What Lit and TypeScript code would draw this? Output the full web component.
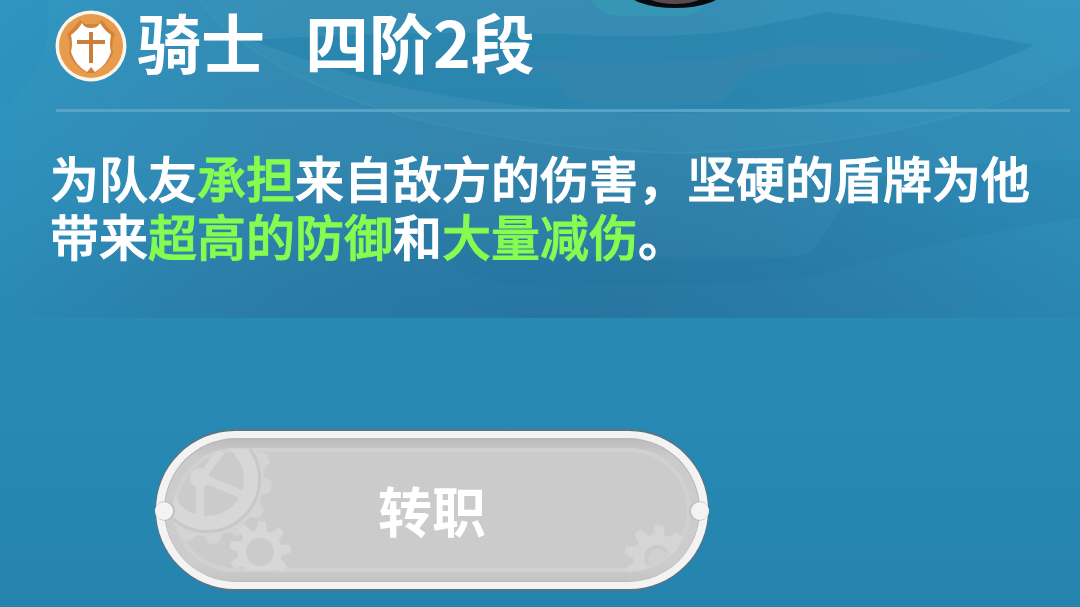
import { LitElement, html, svg, css } from "lit";
import { customElement, property } from "lit/decorators.js";

/** Outline of a gear with square-ish teeth, centred on (cx, cy). */
function gearPath(cx: number, cy: number, outer: number, root: number, teeth: number, turn = 0): string {
  const step = (Math.PI * 2) / teeth;
  const parts: string[] = [];
  for (let i = 0; i < teeth; i++) {
    const a = i * step + turn;
    const corners: [number, number][] = [
      [root, a - step * 0.36],
      [outer, a - step * 0.17],
      [outer, a + step * 0.17],
      [root, a + step * 0.36],
    ];
    for (const [r, t] of corners) {
      parts.push(`${(cx + r * Math.cos(t)).toFixed(1)} ${(cy + r * Math.sin(t)).toFixed(1)}`);
    }
  }
  return `M${parts.join("L")}Z`;
}

const circlePath = (cx: number, cy: number, r: number) =>
  `M${cx - r} ${cy}a${r} ${r} 0 1 0 ${2 * r} 0a${r} ${r} 0 1 0 ${-2 * r} 0Z`;

@customElement("scene-backdrop")
export class SceneBackdrop extends LitElement {
  static styles = css`
    :host { display: block; overflow: hidden; }
    .art { display: block; width: 100%; height: 100%; }
  `;

  render() {
    return html`
      <svg class="art" viewBox="0 0 1080 318" preserveAspectRatio="none" aria-hidden="true">
        <defs>
          <linearGradient id="shadeX" x1="0" x2="1" y1="0" y2="0">
            <stop offset="0" stop-color="#3c6f92" stop-opacity="0" />
            <stop offset=".25" stop-color="#3c6f92" stop-opacity=".28" />
            <stop offset=".6" stop-color="#3c6f92" stop-opacity=".36" />
            <stop offset="1" stop-color="#3c6f92" stop-opacity=".06" />
          </linearGradient>
          <radialGradient id="shadeC" cx=".52" cy="1" r=".55">
            <stop offset="0" stop-color="#1c6c98" stop-opacity=".55" />
            <stop offset="1" stop-color="#1c6c98" stop-opacity="0" />
          </radialGradient>
        </defs>
        <path d="M0 0H46Q60 60 0 110Z" fill="#2386b2" opacity=".15" />
        <rect width="1080" height="318" fill="url(#shadeX)" />
        <rect width="1080" height="318" fill="url(#shadeC)" />
        <path d="M200 0Q250 70 400 115Q540 152 690 153Q860 146 985 107Q1040 88 1080 62V0Z" fill="#4aa0c0" opacity=".14" />
        <path d="M200 0Q250 70 400 115Q540 152 690 153Q860 146 985 107Q1040 88 1080 62" fill="none" stroke="#45a6bd" stroke-width="2" opacity=".25" />
        <path d="M250 40Q420 30 560 34Q670 40 740 30Q790 20 828 12Q900 20 1034 45Q960 80 880 95Q780 113 650 113Q480 110 350 75Z" fill="#1f80aa" opacity=".5" />
        <path d="M440 62H560Q680 66 750 54Q810 38 860 42Q920 46 945 57Q900 66 830 64Q770 64 745 74L725 98Q722 103 710 103H588Q572 102 566 94L550 72Z" fill="#3f86ae" opacity=".45" />
        <path d="M592 0Q600 15 620 16H682Q700 14 708 0Z" fill="#36a2b5" opacity=".5" />
        <path d="M440 206L476 248Q486 257 500 257H790Q806 257 814 248L858 190L1080 150V60L985 110Q860 150 700 154Q560 154 420 120Z" fill="#3b87ae" opacity=".15" />
        <path d="M420 206L476 248Q486 257 500 257H790Q806 257 814 248L862 180Q960 160 1080 160V218Q930 240 815 277Q700 288 500 284Q450 270 400 240Z" fill="#1c7099" opacity=".16" />
        <ellipse cx="675" cy="-10" rx="49" ry="18" fill="#070b10" />
        <ellipse cx="675" cy="-10" rx="34" ry="14" fill="#5a4a4d" />
      </svg>
    `;
  }
}

@customElement("knight-emblem")
export class KnightEmblem extends LitElement {
  static styles = css`
    :host { display: block; }
    .emblem { display: block; width: 100%; height: 100%; }
  `;

  render() {
    return html`
      <svg class="emblem" viewBox="0 0 72 72" aria-hidden="true">
        <circle cx="36" cy="36" r="35.5" fill="#fbf5ea" />
        <circle cx="36" cy="36" r="32" fill="#e79b4d" />
        <path d="M25 10Q18 19 12 24Q16 32 14 43Q17 54 32 63H40Q54 54 58 43Q56 32 60 24Q53 19 47 10L42 14H30Z" fill="#d3843c" />
        <path d="M27 13Q29 18 36 18Q43 18 45 13Q49 20 56 25Q54 34 56 42Q52 55 40 62L36 57L32 62Q20 55 16 42Q18 34 16 25Q23 20 27 13Z" fill="#fff" />
        <path d="M36 22V53M22 32H50" fill="none" stroke="#cb7e3c" stroke-width="4" />
      </svg>
    `;
  }
}

@customElement("plate-button")
export class PlateButton extends LitElement {
  @property() label = "";

  static styles = css`
    :host { display: block; }
    .plate {
      display: grid;
      width: 100%;
      padding: 0;
      border: 0;
      background: none;
      color: #fff;
      font: inherit;
      cursor: pointer;
    }
    .art { grid-area: 1 / 1; display: block; width: 100%; }
    .caption {
      grid-area: 1 / 1;
      place-self: center;
      font-size: 54px;
      line-height: 80px;
      font-weight: 700;
    }
  `;

  render() {
    return html`
      <button class="plate" type="button">
        <svg class="art" viewBox="0 0 554 162" aria-hidden="true">
          <defs>
            <clipPath id="face"><rect x="18" y="20" width="518" height="122" rx="61" /></clipPath>
            <linearGradient id="rim" x1="0" x2="0" y1="0" y2="1">
              <stop offset="0" stop-color="#bdbdbd" />
              <stop offset=".12" stop-color="#cbcbcb" />
              <stop offset=".88" stop-color="#cdcdcd" />
              <stop offset="1" stop-color="#c4c4c4" />
            </linearGradient>
          </defs>
          <rect x="0" y="0" width="554" height="162" rx="81" fill="#5c7480" />
          <rect x="1" y="2" width="552" height="158" rx="79" fill="#f3f3f3" />
          <rect x="9" y="9" width="536" height="144" rx="72" fill="#bababa" />
          <rect x="10" y="11" width="534" height="141" rx="70" fill="url(#rim)" />
          <rect x="20" y="21" width="514" height="120" rx="60" fill="#cbcbcb" stroke="#d1d1d1" stroke-width="4" />
          <g clip-path="url(#face)" fill-rule="evenodd">
            ${svg`
              <path d="${gearPath(52, 50, 65, 57, 14, 0.12)}${circlePath(52, 50, 54)}" fill="#d4d4d4" />
              <path d="${circlePath(52, 50, 54)}${circlePath(52, 50, 51)}" fill="#c8c8c8" />
              <path d="${circlePath(52, 50, 51)}${circlePath(52, 50, 37)}" fill="#d7d7d7" />
              <path d="M45 50V92M45 48L86 65M45 50L66 22" stroke="#d7d7d7" stroke-width="8" fill="none" />
              <circle cx="45" cy="49" r="10" fill="#d7d7d7" />
              <path d="${gearPath(105, 123, 31, 22, 9, -1.5)}${circlePath(105, 123, 14)}" fill="#d7d7d7" />
              <path d="${gearPath(502, 129, 33, 24, 9, -1.5)}${circlePath(502, 129, 13)}" fill="#d5d5d5" />
              <circle cx="503" cy="130" r="10" fill="#d1d1d1" />
            `}
          </g>
          <circle cx="10" cy="82" r="10" fill="#c0c0c0" />
          <circle cx="544" cy="82" r="10" fill="#c0c0c0" />
          <circle cx="9" cy="82" r="9" fill="#f3f3f3" />
          <circle cx="545" cy="82" r="9" fill="#f3f3f3" />
        </svg>
        <span class="caption">${this.label}</span>
      </button>
    `;
  }
}

@customElement("app-root")
export class AppRoot extends LitElement {
  static styles = css`
    :host {
      display: block;
      min-height: 100vh;
      background: linear-gradient(180deg, #3298c3 0%, #2a8ab6 50%, #2688b3 75%, #2584ad 100%);
      color: #fff;
      font-family: "Noto Sans CJK SC", "Noto Sans", sans-serif;
    }
    .panel { display: grid; }
    .backdrop { grid-area: 1 / 1; min-height: 0; contain: size; }
    .content {
      grid-area: 1 / 1;
      position: relative;
      padding: 0 10px 54px 50px;
    }
    .heading {
      display: flex;
      align-items: flex-start;
      gap: 10px;
      height: 109px;
      padding: 0 0 0 5px;
      box-sizing: border-box;
    }
    .emblem { width: 72px; height: 72px; margin-top: 10px; flex: none; }
    .title {
      display: flex;
      gap: 40px;
      margin: 0;
      font-size: 64px;
      line-height: 80px;
      font-weight: 700;
      white-space: nowrap;
    }
    .rule {
      height: 3px;
      margin: 0 0 0 6px;
      border: 0;
      background: #56a3c6;
    }
    .description {
      margin: 36px 0 0;
      font-size: 49px;
      line-height: 58px;
      font-weight: 500;
      -webkit-text-stroke: 1px currentColor;
    }
    .keyword { color: #86fb50; }
    .actions { padding: 111px 0 16px 155px; }
    .change { width: 554px; max-width: 90%; }
  `;

  render() {
    const key = (text: string) => html`<span class="keyword">${text}</span>`;
    return html`
      <section class="panel">
        <scene-backdrop class="backdrop"></scene-backdrop>
        <div class="content">
          <header class="heading">
            <knight-emblem class="emblem"></knight-emblem>
            <h1 class="title"><span>骑士</span><span>四阶2段</span></h1>
          </header>
          <hr class="rule" />
          <p class="description">为队友${key("承担")}来自敌方的伤害，坚硬的盾牌为他带来${key("超高的防御")}和${key("大量减伤")}。</p>
        </div>
      </section>
      <div class="actions">
        <plate-button class="change" label="转职"></plate-button>
      </div>
    `;
  }
}
